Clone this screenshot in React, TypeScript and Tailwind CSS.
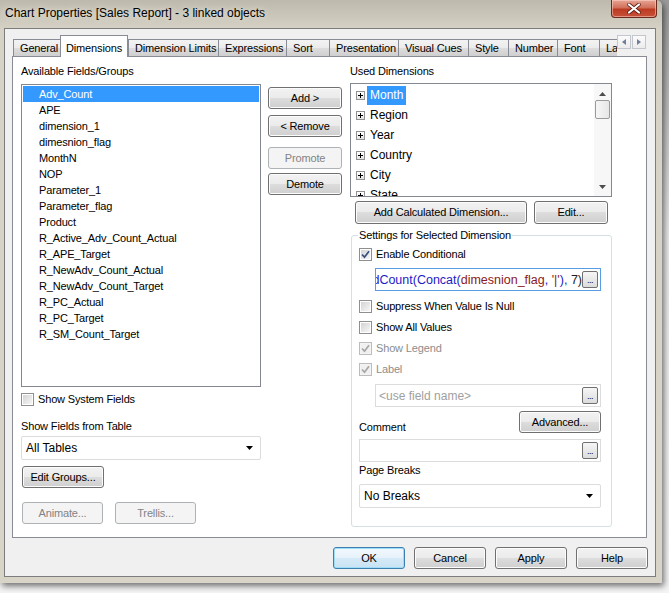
import React from "react";

const FONT = "font-['Liberation_Sans',Arial,sans-serif]";

const BTN =
  "flex items-center justify-center whitespace-nowrap rounded-[3px] border border-[#707070] bg-[linear-gradient(#f2f2f2_0%,#ebebeb_49%,#dddddd_50%,#cfcfcf_100%)] shadow-[inset_0_0_0_1px_#fcfcfc] text-black";
const BTN_OFF =
  "flex items-center justify-center whitespace-nowrap rounded-[3px] border border-[#adb2b5] bg-[#f4f4f4] text-[#838383]";

interface BtnProps {
  children: React.ReactNode;
  disabled?: boolean;
  className?: string;
}

function Btn({ children, disabled, className = "" }: BtnProps) {
  return <div className={`${disabled ? BTN_OFF : BTN} ${className}`}>{children}</div>;
}

function Check({ label, checked, disabled }: { label: string; checked?: boolean; disabled?: boolean }) {
  return (
    <div className="flex h-[13px] items-center">
      <span
        className={`flex h-[13px] w-[13px] shrink-0 items-center justify-center border ${
          disabled ? "border-[#bcbcbc] bg-[#f4f4f4]" : "border-[#8e8f8f] bg-white"
        }`}
      >
        <span
          className={`relative flex h-[9px] w-[9px] items-center justify-center ${
            disabled ? "bg-[#f0f0f0]" : "bg-[linear-gradient(135deg,#d4d4d4,#f6f6f6)]"
          }`}
        >
          {checked && (
            <svg width="11" height="11" viewBox="0 0 11 11" className="absolute">
              <path
                d="M2 5.5 L4.5 8.2 L9 2.2"
                stroke={disabled ? "#a6a6a6" : "#3a4f7d"}
                strokeWidth="1.7"
                fill="none"
              />
            </svg>
          )}
        </span>
      </span>
      <span className={`ml-[4px] whitespace-nowrap leading-[13px] ${disabled ? "text-[#8d8d8d]" : "text-black"}`}>
        {label}
      </span>
    </div>
  );
}

function Dots() {
  return (
    <div className="mr-[2px] flex h-[17px] w-[16px] shrink-0 items-end justify-center rounded-[2px] border border-[#707070] bg-[linear-gradient(#f6f6f6,#dcdcdc)] pb-[3px]">
      <span className="text-[9px] leading-[7px] tracking-[-0.5px]">...</span>
    </div>
  );
}

function Combo({ value, className = "" }: { value: string; className?: string }) {
  return (
    <div className={`flex h-[24px] items-center rounded-[2px] border border-[#dcdcdc] bg-white pl-[4px] pr-[7px] ${className}`}>
      <span className="flex-1 text-[12px] tracking-normal">{value}</span>
      <svg width="7" height="4" viewBox="0 0 7 4">
        <path d="M0 0 H7 L3.5 4 Z" fill="#000" />
      </svg>
    </div>
  );
}

const tabs = [
  { label: "General", w: "w-[47px]" },
  { label: "Dimensions", w: "w-[68px]", active: true },
  { label: "Dimension Limits", w: "w-[90px]" },
  { label: "Expressions", w: "w-[68px]" },
  { label: "Sort", w: "w-[43px]" },
  { label: "Presentation", w: "w-[69px]" },
  { label: "Visual Cues", w: "w-[70px]" },
  { label: "Style", w: "w-[40px]" },
  { label: "Number", w: "w-[49px]" },
  { label: "Font", w: "w-[42px]" },
  { label: "Layout", w: "w-[44px]" },
];

const fields = [
  "Adv_Count",
  "APE",
  "dimension_1",
  "dimesnion_flag",
  "MonthN",
  "NOP",
  "Parameter_1",
  "Parameter_flag",
  "Product",
  "R_Active_Adv_Count_Actual",
  "R_APE_Target",
  "R_NewAdv_Count_Actual",
  "R_NewAdv_Count_Target",
  "R_PC_Actual",
  "R_PC_Target",
  "R_SM_Count_Target",
];

const dims = ["Month", "Region", "Year", "Country", "City", "State"];

function PlusBox() {
  return (
    <span className="flex h-[9px] w-[9px] shrink-0 items-center justify-center border border-[#919191] bg-[linear-gradient(#ffffff,#e4e4e4)]">
      <svg width="5" height="5" viewBox="0 0 5 5">
        <path d="M0 2.5 H5 M2.5 0 V5" stroke="#000" strokeWidth="1" />
      </svg>
    </span>
  );
}

export default function App() {
  return (
    <div
      className={`h-[593px] w-[669px] overflow-hidden bg-[linear-gradient(#9a9a9a,#e8e8e8_40%,#f4f4f4)] text-[11px] tracking-[-0.15px] text-black ${FONT}`}
    >
      {/* window frame */}
      <div className="flex h-[583px] w-[662px] flex-col rounded-tr-[6px] bg-[linear-gradient(#bdb9ad,#d6d2c5_30px,#d8d4c7)] shadow-[2px_3px_6px_rgba(0,0,0,0.55)]">
        {/* title bar */}
        <div className="flex h-[28px] items-start">
          <div className="ml-[5px] mt-[5px] flex-1 text-[12px] leading-[16px] tracking-normal [text-shadow:0_0_6px_#f4f1e8]">
            Chart Properties [Sales Report] - 3 linked objects
          </div>
          <div className="mr-[5px] flex h-[18px] w-[46px] items-center justify-center rounded-b-[4px] border border-t-0 border-[#6b2a1c] bg-[linear-gradient(#e8a594,#d0705a_45%,#bd3a22_55%,#c8513a)] shadow-[inset_0_0_0_1px_rgba(255,220,210,0.5)]">
            <svg width="14" height="11" viewBox="0 0 14 11">
              <path d="M2 1.5 L12 9.5 M12 1.5 L2 9.5" stroke="#5a1c10" strokeWidth="3.6" strokeLinecap="round" />
              <path d="M2 1.5 L12 9.5 M12 1.5 L2 9.5" stroke="#ffffff" strokeWidth="2.2" strokeLinecap="round" />
            </svg>
          </div>
        </div>

        {/* client area */}
        <div className="ml-[4px] flex h-[549px] w-[652px] flex-col border border-[#7d7d7d] bg-[#f0f0f0]">
          {/* tab strip */}
          <div className="relative z-10 flex h-[28px] items-start pl-[8px] pt-[6px]">
            <div className="flex h-[22px] w-[604px] items-end overflow-hidden">
              {tabs.map((t) =>
                t.active ? (
                  <div
                    key={t.label}
                    className={`${t.w} flex h-[22px] shrink-0 items-start justify-center whitespace-nowrap border border-b-0 border-[#898c95] bg-white pt-[4px]`}
                  >
                    {t.label}
                  </div>
                ) : (
                  <div
                    key={t.label}
                    className={`${t.w} mb-[1px] flex h-[17px] shrink-0 items-center justify-start whitespace-nowrap border border-b-0 border-r-0 border-[#898c95] bg-[linear-gradient(#f3f3f3,#ebebeb_50%,#dddddd_51%,#cfcfcf)] pl-[6px] first:border-l`}
                  >
                    {t.label}
                  </div>
                )
              )}
            </div>
            <div className="flex h-[14px] w-[29px] shrink-0 gap-[1px]">
              {[0, 1].map((i) => (
                <div
                  key={i}
                  className="flex h-[14px] w-[14px] items-center justify-center border border-[#c3c6cc] bg-[linear-gradient(#fbfbfb,#ececec)]"
                >
                  <svg width="4" height="6" viewBox="0 0 4 6">
                    <path d={i === 0 ? "M4 0 V6 L0 3 Z" : "M0 0 V6 L4 3 Z"} fill="#6f7f99" />
                  </svg>
                </div>
              ))}
            </div>
          </div>

          {/* tab panel */}
          <div className="-mt-[1px] ml-[7px] flex h-[482px] w-[635px] border border-[#898c95] bg-white">
            {/* left column */}
            <div className="ml-[8px] flex w-[240px] flex-col pt-[8px]">
              <div className="leading-[13px]">Available Fields/Groups</div>
              <div className="mt-[6px] h-[303px] border border-[#828790] p-[1px]">
                {fields.map((f, i) => (
                  <div
                    key={f}
                    className={`flex h-[16px] items-center pl-[16px] ${i === 0 ? "bg-[#3399ff] text-white" : ""}`}
                  >
                    {f}
                  </div>
                ))}
              </div>
              <div className="mt-[6px]">
                <Check label="Show System Fields" />
              </div>
              <div className="mt-[14px] leading-[13px]">Show Fields from Table</div>
              <Combo value="All Tables" className="mt-[3px]" />
              <Btn className="ml-[1px] mt-[6px] h-[22px] w-[82px]">Edit Groups...</Btn>
              <div className="ml-[1px] mt-[14px] flex gap-[12px]">
                <Btn disabled className="h-[22px] w-[81px]">
                  Animate...
                </Btn>
                <Btn disabled className="h-[22px] w-[81px]">
                  Trellis...
                </Btn>
              </div>
            </div>

            {/* middle buttons */}
            <div className="ml-[7px] flex w-[74px] flex-col pt-[30px]">
              <Btn className="h-[22px]">Add &gt;</Btn>
              <Btn className="mt-[6px] h-[22px]">&lt; Remove</Btn>
              <Btn disabled className="mt-[10px] h-[22px]">
                Promote
              </Btn>
              <Btn className="mt-[4px] h-[22px]">Demote</Btn>
            </div>

            {/* right column */}
            <div className="ml-[8px] flex w-[262px] flex-col pt-[8px]">
              <div className="leading-[13px]">Used Dimensions</div>
              <div className="mt-[5px] flex h-[114px] overflow-hidden border border-[#828790]">
                <div className="flex-1 pl-[5px] pt-[1px]">
                  {dims.map((d, i) => (
                    <div key={d} className="flex h-[20px] items-center">
                      <PlusBox />
                      <span
                        className={`ml-[2px] px-[3px] text-[12px] leading-[19px] tracking-normal ${i === 0 ? "bg-[#3399ff] text-white" : ""}`}
                      >
                        {d}
                      </span>
                    </div>
                  ))}
                </div>
                <div className="flex w-[17px] flex-col items-center bg-[#f7f7f7] pt-[8px]">
                  <svg width="7" height="4" viewBox="0 0 7 4">
                    <path d="M0 4 H7 L3.5 0 Z" fill="#4d4d4d" />
                  </svg>
                  <div className="mt-[4px] h-[19px] w-[15px] rounded-[2px] border border-[#9a9a9a] bg-[linear-gradient(90deg,#f6f6f6,#e6e6e6)]" />
                  <div className="flex-1" />
                  <svg width="7" height="4" viewBox="0 0 7 4" className="mb-[7px]">
                    <path d="M0 0 H7 L3.5 4 Z" fill="#4d4d4d" />
                  </svg>
                </div>
              </div>
              <div className="mt-[4px] flex">
                <Btn className="ml-[5px] h-[23px] w-[172px]">Add Calculated Dimension...</Btn>
                <Btn className="ml-[7px] h-[23px] w-[74px]">Edit...</Btn>
              </div>

              <fieldset className="ml-[1px] mt-[5px] h-[298px] w-[261px] min-w-0 rounded-[3px] border border-[#d5dfe5]">
                <legend className="ml-[6px] px-[1px] leading-[13px]">Settings for Selected Dimension</legend>
                <div className="flex min-w-0 flex-col pl-[7px] pr-[10px] pt-[6px]">
                  <Check label="Enable Conditional" checked />
                  <div className="ml-[16px] mt-[7px] flex h-[23px] min-w-0 items-center border border-[#569de5] bg-white">
                    <div className="flex min-w-0 flex-1 justify-end overflow-hidden whitespace-pre text-[12.5px] leading-[16px] tracking-normal">
                      <span>
                        <span className="text-[#1c1cc8]">GetSelectedCount(Concat(</span>
                        <span className="text-[#8b1a1a]">dimesnion_flag</span>
                        <span className="text-[#1c1cc8]">, </span>
                        <span className="text-[#8b1a1a]">'|'</span>
                        <span className="text-[#1c1cc8]">), </span>
                        <span className="text-[#222]">7)</span>
                      </span>
                    </div>
                    <Dots />
                  </div>
                  <div className="mt-[9px]">
                    <Check label="Suppress When Value Is Null" />
                  </div>
                  <div className="mt-[8px]">
                    <Check label="Show All Values" />
                  </div>
                  <div className="mt-[8px]">
                    <Check label="Show Legend" checked disabled />
                  </div>
                  <div className="mt-[8px]">
                    <Check label="Label" checked disabled />
                  </div>
                  <div className="ml-[16px] mt-[8px] flex h-[23px] items-center border border-[#dcdcdc] bg-white">
                    <span className="flex-1 pl-[3px] text-[12px] tracking-normal text-[#a0a0a0]">&lt;use field name&gt;</span>
                    <Dots />
                  </div>
                  <div className="mt-[4px] flex h-[22px] items-end justify-between">
                    <span className="mb-[-1px] leading-[13px]">Comment</span>
                    <Btn className="h-[22px] w-[82px]">Advanced...</Btn>
                  </div>
                  <div className="mt-[6px] flex h-[23px] items-center justify-end border border-[#dcdcdc] bg-white">
                    <Dots />
                  </div>
                  <div className="mt-[2px] leading-[13px]">Page Breaks</div>
                  <Combo value="No Breaks" className="mt-[7px]" />
                </div>
              </fieldset>
            </div>
          </div>

          {/* dialog buttons */}
          <div className="mt-[9px] flex justify-end gap-[9px] pr-[7px]">
            <div className="flex h-[22px] w-[72px] items-center justify-center rounded-[3px] border border-[#3c7fb1] bg-[linear-gradient(#f2f8fc,#e6f2fa_49%,#d6eaf7_50%,#c8e2f3)] shadow-[inset_0_0_0_1px_#9fdcf7]">
              OK
            </div>
            <Btn className="h-[22px] w-[72px]">Cancel</Btn>
            <Btn className="h-[22px] w-[72px]">Apply</Btn>
            <Btn className="h-[22px] w-[72px]">Help</Btn>
          </div>
        </div>
      </div>
    </div>
  );
}
